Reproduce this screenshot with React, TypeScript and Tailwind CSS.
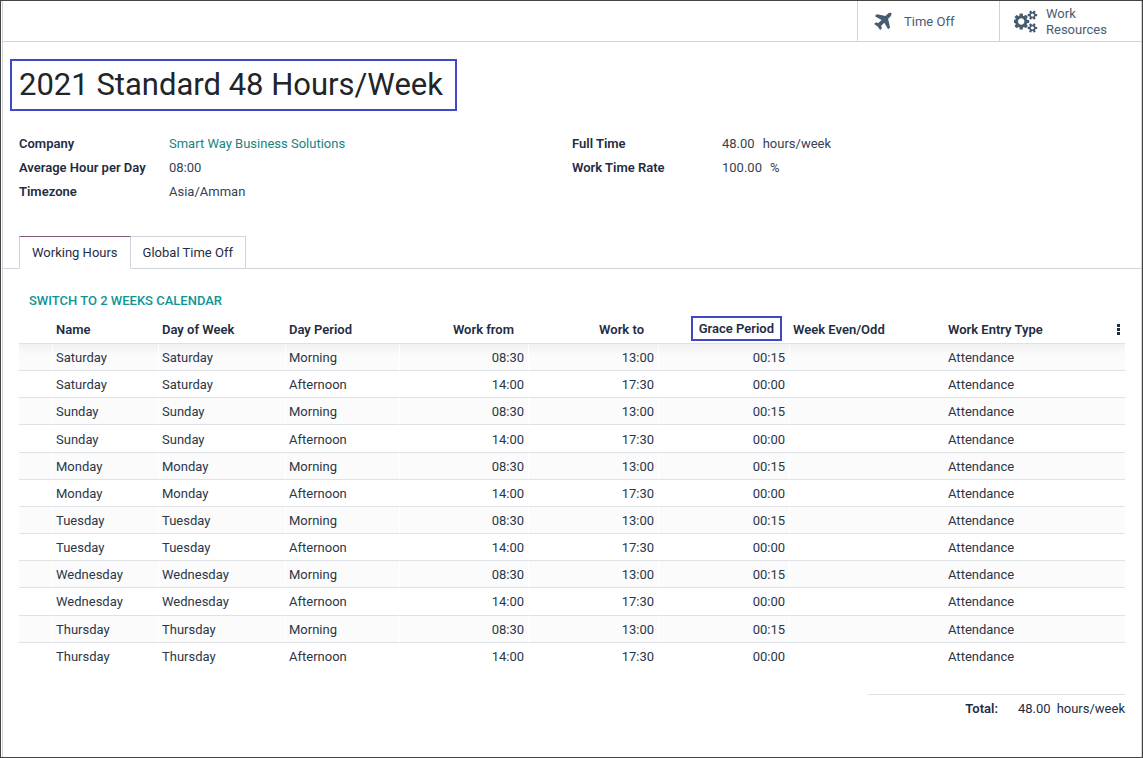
import type { ReactNode } from "react";

const SMALL_COG_BODY =
  "v140q0 16-149 31-12 27-30 52 51 113 51 138 0 4-4 7-122 71-124 71-8 0-46-47t-52-68q-20 2-30 2t-30-2q-14 21-52 68t-46 47q-2 0-124-71-4-3-4-7 0-25 51-138-18-25-30-52-149-15-149-31v-140q0-16 149-31 13-29 30-52-51-113-51-138 0-4 4-7 4-2 35-20t59-34 30-16q8 0 46 46.5t52 67.5q20-2 30-2t30 2q51-71 92-112l6-2q4 0 124 70 4 3 4 7 0 25-51 138 17 23 30 52 149 15 149 31z";

function PlaneIcon() {
  return (
    <svg viewBox="0 0 1792 1792" className="h-[22px] w-[22px] fill-current" aria-hidden="true">
      <path d="M1568 160q44 52 12 148t-108 172l-161 161 160 696q5 19-12 33l-128 96q-7 6-19 6-4 0-7-1-15-3-21-16l-279-508-259 259 53 194q5 17-8 31l-96 96q-9 9-23 9h-2q-15-2-24-13l-189-252-252-189q-11-7-13-23-1-13 9-25l96-97q9-9 23-9 6 0 8 1l194 53 259-259-508-279q-14-8-17-24-2-16 9-27l128-128q14-13 30-8l665 159 160-160q76-76 172-108t148 12z" />
    </svg>
  );
}

function CogsIcon() {
  return (
    <svg viewBox="0 0 1920 1792" className="h-[23px] w-6 fill-current" aria-hidden="true">
      <path
        fillRule="evenodd"
        d={
          "M832 896q0-106-75-181t-181-75-181 75-75 181 75 181 181 75 181-75 75-181zM1600 1408q0-52-38-90t-90-38-90 38-38 90q0 53 37.5 90.5t90.5 37.5 90.5-37.5 37.5-90.5zM1600 384q0-52-38-90t-90-38-90 38-38 90q0 53 37.5 90.5t90.5 37.5 90.5-37.5 37.5-90.5zM1216 805v185q0 10-7 19.5t-16 10.5l-155 24q-11 35-32 76 34 48 90 115 7 11 7 20 0 12-7 19-23 30-82.5 89.5t-78.5 59.5q-11 0-21-7l-115-90q-37 19-77 31-11 108-23 155-7 24-30 24h-186q-11 0-20-7.5t-10-17.5l-23-153q-34-10-75-31l-118 89q-7 7-20 7-11 0-21-8-144-133-144-160 0-9 7-19 10-14 41-53t47-61q-23-44-35-82l-152-24q-10-1-17-9.5t-7-19.5v-185q0-10 7-19.5t16-10.5l155-24q11-35 32-76-34-48-90-115-7-11-7-20 0-12 7-20 22-30 82-89t79-59q11 0 21 7l115 90q34-18 77-32 11-108 23-154 7-24 30-24h186q11 0 20 7.5t10 17.5l23 153q34 10 75 31l118-89q8-7 20-7 11 0 21 8 144 133 144 160 0 8-7 19-12 16-42 54t-45 60q23 48 34 82l152 23q10 2 17 10.5t7 19.5zM1856 1338" +
          SMALL_COG_BODY +
          "M1856 314" +
          SMALL_COG_BODY
        }
      />
    </svg>
  );
}

function Field({ label, children }: { label: string; children: ReactNode }) {
  return (
    <div className="flex h-6 items-center">
      <dt className="w-[150px] shrink-0 font-semibold">{label}</dt>
      <dd className="text-[#374151]">{children}</dd>
    </div>
  );
}

const DAYS = ["Saturday", "Sunday", "Monday", "Tuesday", "Wednesday", "Thursday"];

const ROWS = DAYS.flatMap((day) => [
  { day, period: "Morning", from: "08:30", to: "13:00", grace: "00:15" },
  { day, period: "Afternoon", from: "14:00", to: "17:30", grace: "00:00" },
]);

const CELL = "border-r border-b border-r-white border-b-[#dee2e6] group-last:border-b-transparent pt-0.5";
const TEXT = CELL + " pl-[3px]";
const TIME = CELL + " pr-1 text-right";
const END = "border-b border-b-[#dee2e6] group-last:border-b-transparent pt-0.5 pl-[3px]";
const HEAD = "border-b border-b-[#dee2e6] font-semibold";

export default function App() {
  return (
    <div className="flex min-h-screen border border-[#444444] bg-white pl-px font-['Roboto',sans-serif] text-[13px] leading-5 text-[#1f2d44]">
      <main className="flex-1 border-x border-[#ced4da]">
        <header className="flex h-[41px] justify-end border-b border-[#ced4da] text-[#475c72]">
          <button className="flex w-[142px] items-center gap-2.5 border-l border-[#ced4da] pt-px pl-3.5 text-left">
            <PlaneIcon />
            <span>Time Off</span>
          </button>
          <button className="flex w-[142px] items-center gap-2 border-l border-[#ced4da] pt-px pl-3.5 text-left leading-4">
            <CogsIcon />
            <span>
              Work
              <br />
              Resources
            </span>
          </button>
        </header>

        <div className="pt-[17px] pl-[7px]">
          <h1 className="inline-block border-2 border-[#3f48c8] py-0.5 pr-3 pl-[7px] text-[31px] leading-11 text-[#212529]">
            2021 Standard 48 Hours/Week
          </h1>
        </div>

        <section className="grid grid-cols-2 px-4 pt-[21px]">
          <dl>
            <Field label="Company">
              <a href="#company" className="text-[#178383]">Smart Way Business Solutions</a>
            </Field>
            <Field label="Average Hour per Day">08:00</Field>
            <Field label="Timezone">Asia/Amman</Field>
          </dl>
          <dl>
            <Field label="Full Time">
              <span className="mr-2">48.00</span>hours/week
            </Field>
            <Field label="Work Time Rate">
              <span className="mr-2">100.00</span>%
            </Field>
          </dl>
        </section>

        <div role="tablist" className="mt-8 flex border-b border-[#ced4da] pl-4">
          <button
            role="tab"
            aria-selected="true"
            className="-mb-px h-[33px] border border-t-[#875a7b] border-r-[#ced4da] border-b-white border-l-[#ced4da] bg-white px-3"
          >
            Working Hours
          </button>
          <button
            role="tab"
            aria-selected="false"
            className="h-8 border border-b-0 border-l-0 border-[#ced4da] px-3"
          >
            Global Time Off
          </button>
        </div>

        <section className="px-4 pt-[22px]">
          <button className="ml-2.5 block font-medium text-[#0f9494]">SWITCH TO 2 WEEKS CALENDAR</button>
          <table className="mt-[5px] h-[354px] w-full table-fixed border-separate border-spacing-0">
            <colgroup>
              <col className="w-[34px]" />
              <col className="w-[106px]" />
              <col className="w-[127px]" />
              <col className="w-[114px]" />
              <col className="w-[129px]" />
              <col className="w-[130px]" />
              <col className="w-[131px]" />
              <col className="w-[155px]" />
              <col className="w-[148px]" />
              <col className="w-8" />
            </colgroup>
            <thead>
              <tr className="h-7 text-left">
                <td className={HEAD} />
                <th className={HEAD + " pl-[3px]"}>Name</th>
                <th className={HEAD + " pl-[3px]"}>Day of Week</th>
                <th className={HEAD + " pl-[3px]"}>Day Period</th>
                <th className={HEAD + " pr-[15px] text-right"}>Work from</th>
                <th className={HEAD + " pr-[15px] text-right"}>Work to</th>
                <th className={HEAD + " pr-2 pb-0.5 text-right"}>
                  <span className="inline-block border-2 border-[#3f48c8] px-1.5 pt-px leading-5">Grace Period</span>
                </th>
                <th className={HEAD + " pl-[3px]"}>Week Even/Odd</th>
                <th className={HEAD + " pl-[3px]"}>Work Entry Type</th>
                <td className={HEAD}>
                  <button aria-label="Optional columns" className="ml-auto flex w-3.5 flex-col items-center gap-px">
                    <span className="h-[3px] w-[3px] bg-[#1f2d44]" />
                    <span className="h-[3px] w-[3px] bg-[#1f2d44]" />
                    <span className="h-[3px] w-[3px] bg-[#1f2d44]" />
                  </button>
                </td>
              </tr>
            </thead>
            <tbody className="text-[#2b3648]">
              {ROWS.map((row) => (
                <tr
                  key={row.day + row.period}
                  className="group h-[27px] odd:bg-[#fbfbfb] first:bg-linear-to-b first:from-[#f1f1f1] first:to-[#fbfbfb] first:to-40%"
                >
                  <td className={TEXT} />
                  <td className={TEXT}>{row.day}</td>
                  <td className={TEXT}>{row.day}</td>
                  <td className={TEXT}>{row.period}</td>
                  <td className={TIME}>{row.from}</td>
                  <td className={TIME}>{row.to}</td>
                  <td className={TIME}>{row.grace}</td>
                  <td className={END} />
                  <td className={END}>Attendance</td>
                  <td className={END} />
                </tr>
              ))}
            </tbody>
          </table>

          <div className="mt-6 ml-auto flex w-[257px] justify-end border-t border-[#dee2e6] pt-1">
            <span className="mr-5 font-semibold">Total:</span>
            <span className="mr-1.5">48.00</span>
            <span>hours/week</span>
          </div>
        </section>
      </main>
    </div>
  );
}
